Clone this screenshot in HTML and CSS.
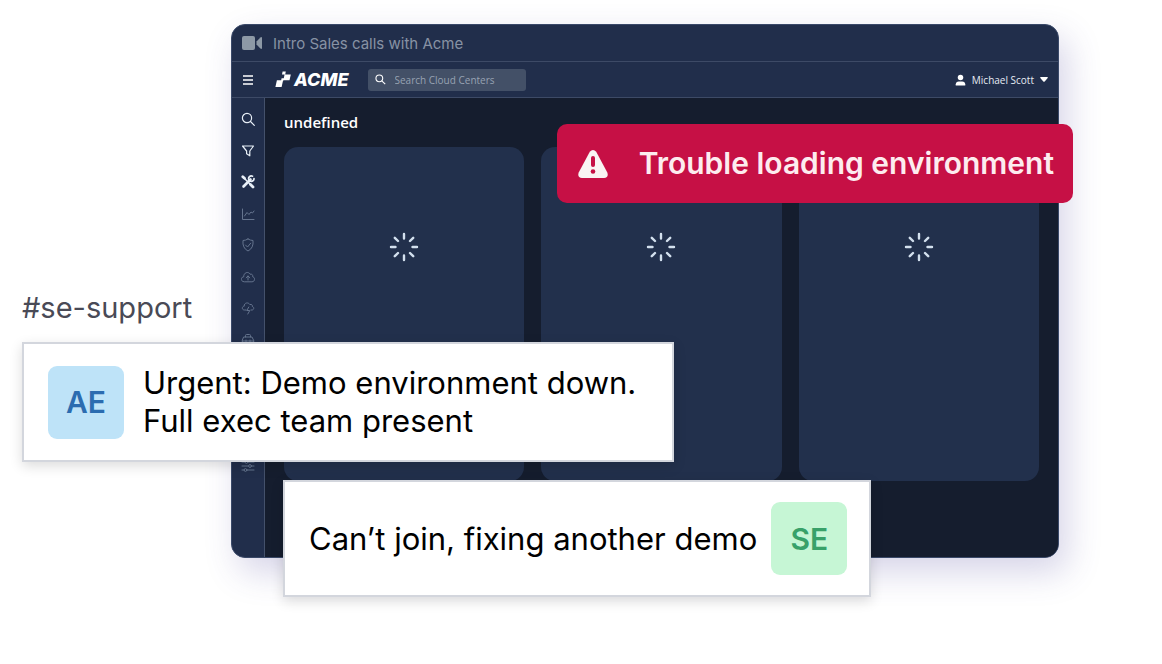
FILE: index.html
```html
<!DOCTYPE html>
<html lang="en">
<head>
<meta charset="utf-8">
<meta name="viewport" content="width=device-width, initial-scale=1">
<title>Intro Sales calls with Acme</title>
<link rel="stylesheet" href="styles.css">
</head>
<body>
<main class="scene">
  <section class="window">
    <header class="titlebar">
      <svg class="camera" viewBox="0 0 20 14" aria-hidden="true"><rect x="0" y="0" width="13" height="14" rx="2"/><path d="M14.500 5.500 18.400 1.400Q20 .6 20 2v10q0 1.400-1.600.600L14.500 8.500z"/></svg>
      <span>Intro Sales calls with Acme</span>
    </header>
    <div class="topbar">
      <button class="icon-button" aria-label="Menu"><svg class="menu" viewBox="0 0 10 10"><path d="M0 1h10M0 5h10M0 9h10"/></svg></button>
      <a class="brand" href="#">
        <svg viewBox="0 0 17 17" aria-hidden="true"><path d="M7.600.500h3.200L10.200 3.500H7zM9.600 3.500h6.200l-1.300 5.700H8.300zM6.600 7.200h2.200l-.7 3H5.900zM1.900 9.200h6.200l-1.500 6.800H.4z"/></svg>
        <span>ACME</span>
      </a>
      <label class="search">
        <svg class="line" viewBox="0 0 14 14" aria-hidden="true"><circle cx="5.500" cy="5.500" r="4.300"/><path d="m9 9 4 4"/></svg>
        <input type="search" placeholder="Search Cloud Centers" aria-label="Search Cloud Centers">
      </label>
      <button class="account">
        <svg class="user" viewBox="0 0 12 12" aria-hidden="true"><circle cx="6" cy="3.200" r="3"/><path d="M.8 12v-1.500Q1.200 7.500 4 7.500h4q2.800 0 3.200 3V12z"/></svg>
        <span>Michael Scott</span>
        <svg class="caret" viewBox="0 0 8 5" aria-hidden="true"><path d="M.8 0h6.400q1 .2.500 1L4.700 4.500q-.7.700-1.400 0L.3 1Q-.2.200.8 0z"/></svg>
      </button>
    </div>
    <div class="body">
      <nav class="sidebar">
        <a href="#" aria-label="Search"><svg viewBox="0 0 14 14"><circle cx="6" cy="6" r="4.600"/><path d="m9.500 9.500 3.800 3.800"/></svg></a>
        <a href="#" aria-label="Filter"><svg viewBox="0 0 14 14"><path d="M1.500 2h11L8.800 7v4.800L5.600 9.700V7z"/></svg></a>
        <a href="#" aria-label="Tools"><svg class="tools" viewBox="0 0 14 14"><path d="m3.500 3.500 7 7" stroke-width="1.500"/><path d="m1.800 1.800 1.700 1.500M9.500 9.500l2.500 2.500" stroke-width="2.800"/><path d="M2.500 11.500 9.500 4.500" stroke-width="2.600"/><path d="M11.500 1.200A2.700 2.700 0 1 0 13 3.500" stroke-width="1.700"/></svg></a>
        <a class="dim" href="#" aria-label="Reports"><svg viewBox="0 0 14 14"><path d="M1.500 2v10.500h11.500M3.500 9l2.500-3.500 2 2L10 5l1.500 1L13 4"/></svg></a>
        <a class="dim" href="#" aria-label="Security"><svg viewBox="0 0 14 14"><path d="M7 1q2.500 1.500 5 1.500Q12.800 10 7 13 1.200 10 2 2.500 4.500 2.500 7 1zM4.500 7l2 2 3.200-3.800"/></svg></a>
        <a class="dim" href="#" aria-label="Uploads"><svg viewBox="0 0 14 14"><path d="M3 11.800C-.5 11.800-.5 7 2.700 6.800 2.500 2.500 7.500 1 9 4.200c2-.5 3 .8 2.800 2.700 2.600.6 2.300 4.900-.5 4.900zM7 10V6M5.200 7.700 7 6l1.800 1.700"/></svg></a>
        <a class="dim" href="#" aria-label="Alerts"><svg viewBox="0 0 14 14"><path d="M5 9H3.500C.6 9 .7 5.300 3.200 5.200 3 1.500 7.500 1 8.800 3.500c2-.4 3 .8 2.500 2C13.500 6 13 9 11 9h-1M7.800 6 5.800 9.500h3L6.800 13"/></svg></a>
        <a class="dim" href="#" aria-label="Toolbox"><svg viewBox="0 0 14 14"><path d="M4.500 4V2.500q0-1 1-1h3q1 0 1 1V4M3 4h8l1.700 3.500V12H1.300V7.500zM1.300 8h11.400M5 7v3M9 7v3"/></svg></a>
        <a class="dim" href="#" aria-label="Storage"><svg viewBox="0 0 14 14"><path d="M2 3h10v8H2zM2 7h10"/></svg></a>
        <a class="dim" href="#" aria-label="Network"><svg viewBox="0 0 14 14"><circle cx="7" cy="7" r="5.500"/><path d="M1.500 7h11"/></svg></a>
        <a class="dim" href="#" aria-label="Documents"><svg viewBox="0 0 14 14"><path d="M3 1.500h8v11H3zM5 5h4M5 8h4"/></svg></a>
        <a class="dim" href="#" aria-label="Settings"><svg viewBox="0 0 14 14"><path d="M1 3h3M7 3h6M1 7h6M10.500 7H13M1 11h2M6 11h7"/><circle cx="5.500" cy="3" r="1.400"/><circle cx="9" cy="7" r="1.400"/><circle cx="4.500" cy="11" r="1.400"/></svg></a>
      </nav>
      <div class="content">
        <h1>undefined</h1>
        <div class="panels">
          <div class="panel"><svg class="spinner" viewBox="0 0 30 30" role="img" aria-label="Loading"><path d="M15 2v4.500M15 23.500V28M2 15h4.500M23.500 15H28M5.800 5.800 9 9M21 21l3.200 3.200M5.800 24.200 9 21M21 9l3.200-3.200"/></svg></div>
          <div class="panel"><svg class="spinner" viewBox="0 0 30 30" role="img" aria-label="Loading"><path d="M15 2v4.500M15 23.500V28M2 15h4.500M23.500 15H28M5.800 5.800 9 9M21 21l3.200 3.200M5.800 24.200 9 21M21 9l3.200-3.200"/></svg></div>
          <div class="panel"><svg class="spinner" viewBox="0 0 30 30" role="img" aria-label="Loading"><path d="M15 2v4.500M15 23.500V28M2 15h4.500M23.500 15H28M5.800 5.800 9 9M21 21l3.200 3.200M5.800 24.200 9 21M21 9l3.200-3.200"/></svg></div>
        </div>
      </div>
    </div>
    <div class="toast" role="alert">
      <svg viewBox="0 0 30 28" aria-hidden="true"><path class="sign" d="M11.800 1.800q3.200-3.600 6.400 0L29.300 22.500Q31 27.500 26 28H4Q-1 27.500.7 22.500z"/><path class="mark" d="M15 8v7"/><circle class="dot" cx="15" cy="21.500" r="2.300"/></svg>
      <span>Trouble loading environment</span>
    </div>
  </section>
  <section class="thread">
    <h2>#se-support</h2>
    <article class="message">
      <span class="avatar avatar-ae">AE</span>
      <p>Urgent: Demo environment down.<br>Full exec team present</p>
    </article>
  </section>
  <article class="message reply">
    <p>Can’t join, fixing another demo</p>
    <span class="avatar avatar-se">SE</span>
  </article>
</main>
</body>
</html>
```
FILE: styles.css
```css
* { box-sizing: border-box; }
body { margin: 0; background: #fff; font-family: Inter, "Liberation Sans", sans-serif; }
h1, h2, p { margin: 0; }
a { color: inherit; text-decoration: none; }
button { border: 0; padding: 0; background: none; color: inherit; font: inherit; }
svg { display: block; flex: none; }

.scene { position: relative; padding: 24px 103px 64px 231px; }

.window {
  position: relative;
  border: 1px solid #3a4969;
  border-radius: 14px;
  background: #212e4b;
  color: #fff;
  box-shadow: 8px 14px 34px rgba(68, 60, 150, 0.22);
}
.titlebar {
  display: flex;
  align-items: center;
  gap: 11px;
  height: 37px;
  padding: 0 10px;
  border-bottom: 1px solid #3d4a66;
  color: #8792a4;
  font-size: 15px;
}
.camera { width: 20px; height: 14px; fill: #8d99a6; }

.topbar {
  display: flex;
  align-items: center;
  height: 36px;
  padding: 0 10px 0 11px;
  border-bottom: 1px solid #3d4a66;
  font-family: "Open Sans", sans-serif;
}
.menu { width: 10px; height: 10px; stroke: #fff; stroke-width: 1.4; }
.brand {
  display: flex;
  align-items: center;
  gap: 2px;
  margin-left: 22px;
  font: italic 800 18px/20px Inter, sans-serif;
}
.brand svg { width: 17px; height: 17px; fill: #fff; }
.search {
  display: flex;
  align-items: center;
  gap: 9px;
  width: 158px;
  height: 22px;
  margin-left: 19px;
  padding: 0 7px;
  border-radius: 3px;
  background: #435067;
}
.search svg { width: 11px; height: 11px; fill: none; stroke: #fff; stroke-width: 1.4; }
.search input {
  flex: 1;
  min-width: 0;
  border: 0;
  padding: 0;
  background: none;
  color: #fff;
  font: 10px/14px "Open Sans", sans-serif;
}
.search input::placeholder { color: #97a2b2; opacity: 1; }
.account { display: flex; align-items: center; gap: 6px; margin-left: auto; color: #e6ebf3; font-size: 10px; }
.user { width: 11px; height: 12px; fill: #fff; }
.caret { width: 8px; height: 5px; fill: #fff; }

.body { display: flex; border-radius: 0 0 13px 13px; overflow: hidden; }
.sidebar {
  display: flex;
  flex-direction: column;
  justify-content: space-between;
  align-items: center;
  width: 33px;
  padding: 14px 0 84px;
  border-right: 1px solid #44516b;
}
.sidebar svg { width: 14px; height: 14px; fill: none; stroke: #e8eff7; stroke-width: 1.2; stroke-linecap: round; stroke-linejoin: round; }
.sidebar .dim svg { stroke: #65748e; stroke-width: 1; }

.content { flex: 1; padding: 14px 19px 76px; background: #151d2e; }
.content h1 { font: 600 15px/20px "Open Sans", sans-serif; }
.panels { display: grid; grid-template-columns: repeat(3, 1fr); gap: 17px; margin-top: 15px; }
.panel { display: flex; justify-content: center; min-height: 334px; padding-top: 85px; border-radius: 14px; background: #22304c; }
.spinner { width: 30px; height: 30px; fill: none; stroke: #d3e0ee; stroke-width: 2.4; stroke-linecap: round; }

.toast {
  position: absolute;
  top: 99px;
  right: -15px;
  display: flex;
  align-items: center;
  gap: 31px;
  padding: 20px 19px 20px 21px;
  border-radius: 10px;
  background: #c61045;
  color: #fdecef;
  font-size: 30px;
  font-weight: 600;
  line-height: 39px;
  white-space: nowrap;
}
.toast svg { width: 30px; height: 28px; }
.sign { fill: #f9f4f3; }
.mark { stroke: #c61045; stroke-width: 4; stroke-linecap: round; }
.dot { fill: #c61045; }

.thread { position: absolute; top: 289px; left: 22px; }
.thread h2 { color: #494a56; font-size: 29px; font-weight: 400; line-height: 38px; }
.message {
  display: flex;
  align-items: center;
  gap: 19px;
  padding: 20px 24px;
  border: 2px solid #d3d6dd;
  background: #fff;
  color: #000;
  font-size: 31px;
  line-height: 38px;
  white-space: nowrap;
  box-shadow: 0 4px 12px rgba(0, 0, 0, 0.14);
}
.thread .message { margin-top: 15px; padding-right: 36px; }
.reply { position: absolute; top: 480px; left: 283px; gap: 14px; padding-right: 22px; }
.avatar { display: grid; place-items: center; width: 76px; height: 73px; border-radius: 9px; font-size: 30px; font-weight: 600; }
.avatar-ae { background: #bee3f8; color: #2b6cb0; }
.avatar-se { background: #c6f6d5; color: #38a169; }
```
